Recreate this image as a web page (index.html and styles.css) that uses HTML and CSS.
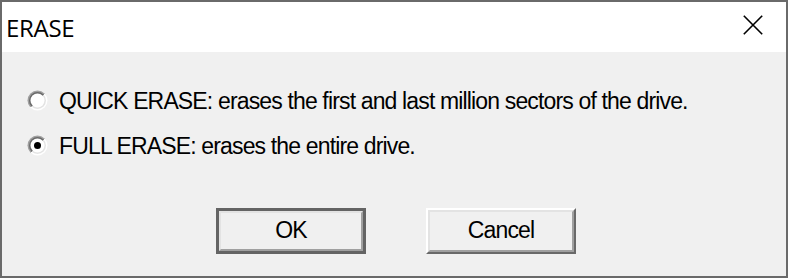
FILE: index.html
```html
<!DOCTYPE html>
<html lang="en">
<head>
<meta charset="utf-8">
<title>ERASE</title>
<link rel="stylesheet" href="styles.css">
</head>
<body>
<div class="window">
  <div class="titlebar">
    <span class="title">ERASE</span>
    <div class="close" aria-label="Close">
      <svg width="20" height="20" viewBox="0 0 20 20">
        <path d="M0.8 0.8 L19.2 19.2 M19.2 0.8 L0.8 19.2" stroke="#000" stroke-width="1.6" fill="none"/>
      </svg>
    </div>
  </div>
  <div class="content">
    <div class="options">
      <label class="option">
        <svg class="radio" width="21" height="21" viewBox="0 0 21 21">
          <defs>
            <linearGradient id="ringOuter" x1="0" y1="0" x2="1" y2="1">
              <stop offset="0.5" stop-color="#a0a0a0"/>
              <stop offset="0.5" stop-color="#ffffff"/>
            </linearGradient>
            <linearGradient id="ringInner" x1="0" y1="0" x2="1" y2="1">
              <stop offset="0.5" stop-color="#696969"/>
              <stop offset="0.5" stop-color="#e3e3e3"/>
            </linearGradient>
          </defs>
          <circle cx="10.5" cy="10.5" r="10" fill="url(#ringOuter)"/>
          <circle cx="10.5" cy="10.5" r="8.5" fill="url(#ringInner)"/>
          <circle cx="10.5" cy="10.5" r="7" fill="#ffffff"/>
        </svg>
        <span class="label">QUICK ERASE: erases the first and last million sectors of the drive.</span>
      </label>
      <label class="option">
        <svg class="radio" width="21" height="21" viewBox="0 0 21 21">
          <circle cx="10.5" cy="10.5" r="10" fill="url(#ringOuter)"/>
          <circle cx="10.5" cy="10.5" r="8.5" fill="url(#ringInner)"/>
          <circle cx="10.5" cy="10.5" r="7" fill="#ffffff"/>
          <circle cx="10.5" cy="10.5" r="3.5" fill="#000000"/>
        </svg>
        <span class="label">FULL ERASE: erases the entire drive.</span>
      </label>
    </div>
    <div class="buttons">
      <div class="btn default"><span class="btn-inner">OK</span></div>
      <div class="btn"><span class="btn-inner">Cancel</span></div>
    </div>
  </div>
</div>
</body>
</html>
```
FILE: styles.css
```css
html, body {
  margin: 0;
  padding: 0;
}

body {
  width: 788px;
  height: 278px;
  overflow: hidden;
  background: #6a6a6a;
}

.window {
  box-sizing: border-box;
  width: 788px;
  height: 278px;
  border: 2px solid #6a6a6a;
  background: #f0f0f0;
  display: flex;
  flex-direction: column;
}

.titlebar {
  height: 50px;
  flex: 0 0 50px;
  background: #ffffff;
  display: flex;
  align-items: center;
  justify-content: space-between;
  padding-left: 4px;
}

.title {
  font-family: "Open Sans", "Noto Sans", sans-serif;
  font-size: 24px;
  color: #000;
  letter-spacing: -0.3px;
}

.close {
  width: 20px;
  height: 20px;
  align-self: flex-start;
  margin-top: 13px;
  margin-right: 23px;
}

.close svg {
  display: block;
}

.content {
  flex: 1;
  display: flex;
  flex-direction: column;
  padding-top: 27px;
}

.options {
  display: flex;
  flex-direction: column;
  padding-left: 25px;
}

.option {
  height: 45px;
  display: flex;
  align-items: center;
  gap: 11px;
}

.radio {
  display: block;
  flex: 0 0 21px;
  margin-bottom: 2px;
}

.label,
.btn-inner {
  font-family: "Liberation Sans", Arial, sans-serif;
  font-size: 23px;
  letter-spacing: -0.85px;
  color: #000;
  white-space: nowrap;
}

.buttons {
  display: flex;
  justify-content: center;
  gap: 60px;
  margin-top: 39px;
  padding-left: 4px;
}

.btn {
  box-sizing: border-box;
  width: 150px;
  height: 46px;
  border: 2px solid;
  border-color: #ffffff #696969 #696969 #ffffff;
  display: flex;
}

.btn.default {
  border: 3px solid #646464;
}

.btn-inner {
  flex: 1;
  border: 2px solid;
  border-color: #e3e3e3 #a0a0a0 #a0a0a0 #e3e3e3;
  display: flex;
  align-items: center;
  justify-content: center;
  padding-bottom: 2px;
}
```
